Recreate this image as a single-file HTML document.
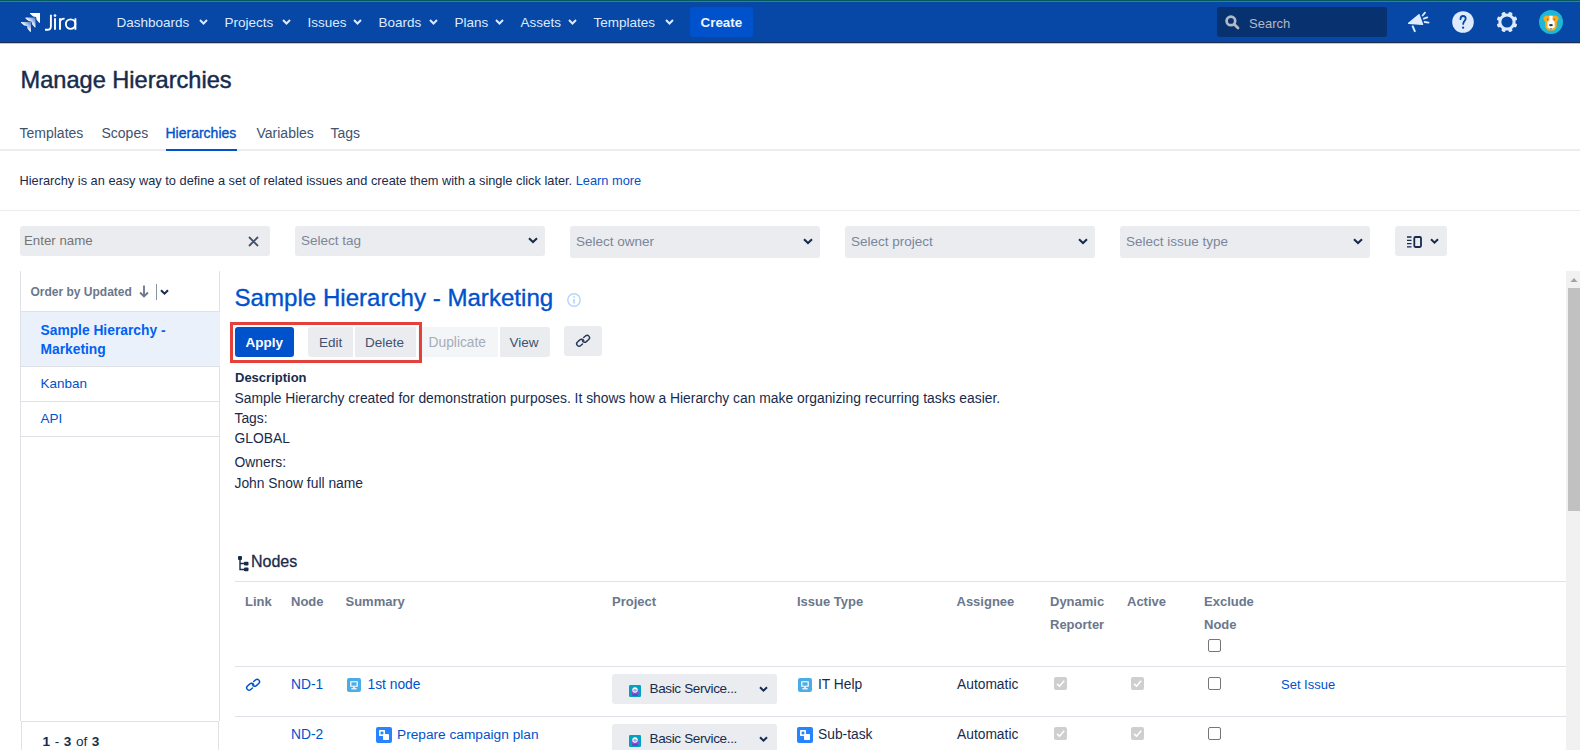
<!DOCTYPE html>
<html><head><meta charset="utf-8">
<style>
html,body{margin:0;padding:0;width:1580px;height:750px;overflow:hidden;background:#fff;position:relative;font-family:"Liberation Sans",sans-serif;color:#172B4D}
.a{position:absolute;white-space:nowrap;line-height:1}
.b{position:absolute}
.nt{color:#DEEBFF;font-size:13.5px;top:15.9px}
.tab{font-size:14px;top:125.5px;color:#42526E}
.sel{background:#EBECF0;border-radius:3px;height:32px;top:226px;width:250px}
.sel2{height:30px}
.selt{font-size:13.5px;color:#7A869A;top:235.3px}
.th{font-size:13px;font-weight:bold;color:#6B778C}
.lnk{color:#0052CC}
.btn{background:#EBECF0;height:30px;top:327px}
svg{position:absolute;overflow:visible}
</style></head><body>

<!-- NAV -->
<div class="b" style="left:0;top:0;width:1580px;height:43px;background:#0747A6"></div>
<div class="b" style="left:0;top:0;width:1580px;height:1px;background:#035A5C"></div>
<div class="b" style="left:0;top:1px;width:1580px;height:1px;background:#3E7E80"></div>
<div class="b" style="left:0;top:42px;width:1580px;height:1px;background:#1D3050"></div>
<div class="b" style="left:0;top:43px;width:1580px;height:1px;background:#C4C7CF"></div>

<!-- logo -->
<svg style="left:21px;top:13px" width="19" height="19" viewBox="0 0 19 19">
  <defs>
    <linearGradient id="g1" x1="0.9" y1="0.1" x2="0.1" y2="0.9"><stop offset="0" stop-color="#5F8AD0"/><stop offset="0.55" stop-color="#fff"/></linearGradient>
  </defs>
  <path transform="translate(9 0)" d="M0 0H10V9.8L9.1 9.7L6.6 6.7L6.1 4.1L3.2 3.5L0 0.8Z" fill="#fff"/>
  <path transform="translate(4.5 4.6)" d="M0 0H10V9.8L9.1 9.7L6.6 6.7L6.1 4.1L3.2 3.5L0 0.8Z" fill="url(#g1)"/>
  <path transform="translate(0 9)" d="M0 0H10V9.8L9.1 9.7L6.6 6.7L6.1 4.1L3.2 3.5L0 0.8Z" fill="url(#g1)"/>
</svg>
<svg style="left:0px;top:0px" width="90" height="40" viewBox="0 0 90 40">
  <g stroke="#fff" stroke-width="1.9" fill="none">
    <path d="M50.9 14.8V26.2C50.9 28.6 49.4 29.8 47.2 29.8H45"/>
    <path d="M55 18.3V29.8"/>
    <path d="M60 18.3V29.8M60 22.4C60 19.8 61.8 18.6 64.6 18.6"/>
    <circle cx="70.6" cy="24.1" r="4.75"/>
    <path d="M75.4 18.3V29.8"/>
  </g>
  <circle cx="55" cy="15.6" r="1.35" fill="#fff"/>
</svg>
<div class="a nt" style="left:116.5px">Dashboards</div>
<div class="a nt" style="left:224.5px">Projects</div>
<div class="a nt" style="left:307.5px">Issues</div>
<div class="a nt" style="left:378.5px">Boards</div>
<div class="a nt" style="left:454.5px">Plans</div>
<div class="a nt" style="left:520.5px">Assets</div>
<div class="a nt" style="left:593.5px">Templates</div>
<svg style="left:199px;top:19px" width="9" height="6"><path d="M1 1L4.5 4.5L8 1" stroke="#DEEBFF" stroke-width="2" fill="none"/></svg>
<svg style="left:281.5px;top:19px" width="9" height="6"><path d="M1 1L4.5 4.5L8 1" stroke="#DEEBFF" stroke-width="2" fill="none"/></svg>
<svg style="left:352.5px;top:19px" width="9" height="6"><path d="M1 1L4.5 4.5L8 1" stroke="#DEEBFF" stroke-width="2" fill="none"/></svg>
<svg style="left:429px;top:19px" width="9" height="6"><path d="M1 1L4.5 4.5L8 1" stroke="#DEEBFF" stroke-width="2" fill="none"/></svg>
<svg style="left:495px;top:19px" width="9" height="6"><path d="M1 1L4.5 4.5L8 1" stroke="#DEEBFF" stroke-width="2" fill="none"/></svg>
<svg style="left:568px;top:19px" width="9" height="6"><path d="M1 1L4.5 4.5L8 1" stroke="#DEEBFF" stroke-width="2" fill="none"/></svg>
<svg style="left:664.5px;top:19px" width="9" height="6"><path d="M1 1L4.5 4.5L8 1" stroke="#DEEBFF" stroke-width="2" fill="none"/></svg>

<div class="b" style="left:690px;top:7px;width:63px;height:30px;background:#0052CC;border-radius:3px"></div>
<div class="a" style="left:700.5px;top:16px;font-size:13.4px;font-weight:bold;color:#F0F5FF">Create</div>

<!-- search -->
<div class="b" style="left:1217px;top:7px;width:170px;height:30px;background:#08316F;border-radius:3px"></div>
<svg style="left:1225px;top:15px" width="15" height="15"><circle cx="5.9" cy="5.9" r="4.3" stroke="#B3BAC5" stroke-width="2.7" fill="none"/><path d="M9.2 9.2L13 13" stroke="#B3BAC5" stroke-width="2.8" stroke-linecap="round"/></svg>
<div class="a" style="left:1249px;top:17px;font-size:13px;color:#B3BAC5">Search</div>

<!-- megaphone -->
<svg style="left:1404px;top:8px" width="30" height="28">
  <path d="M4.6 15.3L15 6.8L18.6 16.4Z" fill="#DEEBFF" stroke="#DEEBFF" stroke-width="1.4" stroke-linejoin="round"/>
  <path d="M8.7 18.3L10.8 23.2" stroke="#DEEBFF" stroke-width="2" stroke-linecap="round"/>
  <path d="M18.6 7.5L21 4.6M19.8 10.6L23.3 9.4M20.6 14L24.6 14.6" stroke="#DEEBFF" stroke-width="1.8" stroke-linecap="round"/>
</svg>
<!-- help -->
<svg style="left:1452px;top:11px" width="22" height="22"><circle cx="11" cy="11" r="10.8" fill="#DEEBFF"/><path d="M8.5 8.2C8.5 6.2 9.7 5 11.1 5C12.6 5 13.7 6.1 13.7 7.6C13.7 9.8 11.2 10 11.2 12.9" stroke="#0747A6" stroke-width="1.8" fill="none" stroke-linecap="round"/><circle cx="11.1" cy="16.7" r="1.15" fill="#0747A6"/></svg>
<!-- gear -->
<svg style="left:1496px;top:11px" width="22" height="22" viewBox="0 0 22 22">
  <g fill="#DEEBFF">
    <circle cx="11" cy="11" r="8.6"/>
    <rect x="9" y="0.6" width="4" height="20.8" rx="1.2" transform="rotate(22.5 11 11)"/>
    <rect x="9" y="0.6" width="4" height="20.8" rx="1.2" transform="rotate(67.5 11 11)"/>
    <rect x="9" y="0.6" width="4" height="20.8" rx="1.2" transform="rotate(112.5 11 11)"/>
    <rect x="9" y="0.6" width="4" height="20.8" rx="1.2" transform="rotate(157.5 11 11)"/>
  </g>
  <circle cx="11" cy="11" r="5.6" fill="#0747A6"/>
</svg>
<!-- avatar -->
<svg style="left:1539px;top:10px" width="24" height="24" viewBox="0 0 24 24">
  <circle cx="12" cy="12" r="12" fill="#1CB8D8"/>
  <path d="M4.2 7.6L6.8 5.4L10 5.8H14L17.2 5.4L19.8 7.6L19 10.6L17.9 11.4L17.6 17.6L15.2 20.6H8.8L6.4 17.6L6.1 11.4L5 10.6Z" fill="#FFA81A"/>
  <path d="M10.3 5.8H13.7L13.5 9.8L15.6 12V17.6L12 19.2L8.4 17.6V12L10.5 9.8Z" fill="#fff"/>
  <ellipse cx="12" cy="15.2" rx="1.9" ry="1.15" fill="#253858"/>
  <rect x="7.9" y="8.6" width="1.5" height="1.5" fill="#8C7B5A"/><rect x="14.6" y="8.6" width="1.5" height="1.5" fill="#8C7B5A"/>
  <rect x="11.3" y="18.3" width="1.4" height="0.9" fill="#253858"/>
</svg>

<!-- HEADER -->
<div class="a" style="left:20.5px;top:68.6px;font-size:23.6px;color:#172B4D;-webkit-text-stroke:0.45px #172B4D">Manage Hierarchies</div>

<div class="a tab" style="left:19.5px">Templates</div>
<div class="a tab" style="left:101.5px">Scopes</div>
<div class="a tab lnk" style="left:165.5px;-webkit-text-stroke:0.35px #0052CC">Hierarchies</div>
<div class="a tab" style="left:256.5px">Variables</div>
<div class="a tab" style="left:330.5px">Tags</div>
<div class="b" style="left:0;top:149px;width:1580px;height:2px;background:#EBECF0"></div>
<div class="b" style="left:166px;top:149px;width:71px;height:2px;background:#0052CC"></div>

<div class="a" style="left:19.5px;top:174.9px;font-size:12.8px;color:#172B4D">Hierarchy is an easy way to define a set of related issues and create them with a single click later. <span class="lnk">Learn more</span></div>
<div class="b" style="left:0;top:210px;width:1580px;height:1px;background:#EBECF0"></div>

<!-- FILTERS -->
<div class="b" style="left:20px;top:226px;width:250px;height:30px;background:#EBECF0;border-radius:3px"></div>
<div class="a" style="left:24px;top:233.8px;font-size:13.3px;color:#757575">Enter name</div>
<svg style="left:248px;top:235.5px" width="11" height="11"><path d="M1 1L10 10M10 1L1 10" stroke="#42526E" stroke-width="1.8"/></svg>

<div class="b sel sel2" style="left:295px"></div>
<div class="a selt" style="left:301px;top:234.4px">Select tag</div>
<svg style="left:528px;top:237px" width="10" height="7"><path d="M1 1.2L5 5L9 1.2" stroke="#172B4D" stroke-width="2" fill="none"/></svg>
<div class="b sel" style="left:570px"></div>
<div class="a selt" style="left:576px">Select owner</div>
<svg style="left:803px;top:238px" width="10" height="7"><path d="M1 1.2L5 5L9 1.2" stroke="#172B4D" stroke-width="2" fill="none"/></svg>
<div class="b sel" style="left:845px"></div>
<div class="a selt" style="left:851px">Select project</div>
<svg style="left:1078px;top:238px" width="10" height="7"><path d="M1 1.2L5 5L9 1.2" stroke="#172B4D" stroke-width="2" fill="none"/></svg>
<div class="b sel" style="left:1120px"></div>
<div class="a selt" style="left:1126px">Select issue type</div>
<svg style="left:1353px;top:238px" width="10" height="7"><path d="M1 1.2L5 5L9 1.2" stroke="#172B4D" stroke-width="2" fill="none"/></svg>

<div class="b" style="left:1395px;top:226px;width:52px;height:30px;background:#EBECF0;border-radius:3px"></div>
<svg style="left:1407px;top:236px" width="15" height="12">
  <path d="M0 1H4.5M0 4.3H4.5M0 7.6H4.5M0 10.9H4.5" stroke="#172B4D" stroke-width="1.3"/>
  <rect x="7.3" y="1" width="6.7" height="10" rx="1.2" stroke="#172B4D" stroke-width="1.8" fill="none"/>
</svg>
<svg style="left:1430px;top:238px" width="10" height="7"><path d="M1 1.2L4.5 4.6L8 1.2" stroke="#172B4D" stroke-width="2" fill="none"/></svg>

<!-- LEFT PANEL -->
<div class="b" style="left:20px;top:271px;width:1px;height:450px;background:#DFE1E6"></div>
<div class="b" style="left:219px;top:271px;width:1px;height:450px;background:#DFE1E6"></div>
<div class="a" style="left:30.5px;top:286.4px;font-size:12px;font-weight:bold;color:#6B778C">Order by Updated</div>
<svg style="left:139px;top:285px" width="10" height="13"><path d="M5 0.5V11.5M1 7.5L5 11.5L9 7.5" stroke="#6B778C" stroke-width="1.8" fill="none"/></svg>
<div class="b" style="left:156px;top:284px;width:1px;height:16px;background:#8993A4"></div>
<svg style="left:160px;top:289px" width="10" height="7"><path d="M1 1.2L4.5 4.6L8 1.2" stroke="#172B4D" stroke-width="2" fill="none"/></svg>
<div class="b" style="left:21px;top:311px;width:198px;height:1px;background:#DFE1E6"></div>
<div class="b" style="left:21px;top:312px;width:199px;height:54px;background:#EAF1FB"></div>
<div class="a" style="left:40.5px;top:323.5px;font-size:13.8px;font-weight:bold;color:#0061F2">Sample Hierarchy -</div>
<div class="a" style="left:40.5px;top:343.1px;font-size:13.8px;font-weight:bold;color:#0061F2">Marketing</div>
<div class="b" style="left:21px;top:366px;width:198px;height:1px;background:#DFE1E6"></div>
<div class="a lnk" style="left:40.5px;top:377.2px;font-size:13.5px">Kanban</div>
<div class="b" style="left:21px;top:401px;width:198px;height:1px;background:#DFE1E6"></div>
<div class="a lnk" style="left:40.5px;top:411.7px;font-size:13.5px">API</div>
<div class="b" style="left:21px;top:436px;width:198px;height:1px;background:#DFE1E6"></div>
<div class="b" style="left:21px;top:721px;width:198px;height:1px;background:#DFE1E6"></div>
<div class="b" style="left:21px;top:721px;width:1px;height:29px;background:#DFE1E6"></div>
<div class="b" style="left:218px;top:721px;width:1px;height:29px;background:#DFE1E6"></div>
<div class="a" style="left:42.5px;top:735.2px;font-size:13.6px;color:#172B4D;word-spacing:0.8px"><b>1</b> - <b>3</b> of <b>3</b></div>

<!-- MAIN -->
<div class="a lnk" style="left:234.5px;top:286.2px;font-size:24.1px;-webkit-text-stroke:0.35px #0052CC">Sample Hierarchy - Marketing</div>
<svg style="left:567px;top:293px" width="14" height="14"><circle cx="7" cy="7" r="6.2" stroke="#B3D4FF" stroke-width="1.4" fill="none"/><path d="M7 6V10.5" stroke="#B3D4FF" stroke-width="1.6"/><circle cx="7" cy="4" r="0.9" fill="#B3D4FF"/></svg>

<div class="b" style="left:230px;top:322px;width:186px;height:35px;border:3px solid #E5413B"></div>
<div class="b" style="left:235px;top:327px;width:59px;height:30px;background:#0052CC;border-radius:3px"></div>
<div class="a" style="left:245.5px;top:335.6px;font-size:13.5px;font-weight:bold;color:#fff">Apply</div>
<div class="b btn" style="left:308px;width:45px;border-radius:3px 0 0 3px"></div>
<div class="a" style="left:319px;top:335.8px;font-size:13.5px;color:#42526E">Edit</div>
<div class="b btn" style="left:355px;width:61px"></div>
<div class="a" style="left:365px;top:335.8px;font-size:13.5px;color:#42526E">Delete</div>
<div class="b btn" style="left:418px;width:80px;background:#F4F5F7"></div>
<div class="a" style="left:428.5px;top:335.8px;font-size:13.8px;color:#A5ADBA">Duplicate</div>
<div class="b btn" style="left:500px;width:50px;border-radius:0 3px 3px 0"></div>
<div class="a" style="left:509.5px;top:335.8px;font-size:13.5px;color:#42526E">View</div>
<div class="b" style="left:230px;top:322px;width:186px;height:35px;border:3px solid #E5413B"></div>
<div class="b" style="left:564px;top:326px;width:38px;height:30px;background:#EBECF0;border-radius:3px"></div>
<svg style="left:574.6px;top:332.6px" width="16" height="16"><g stroke="#253858" stroke-width="1.45" fill="none" stroke-linecap="round"><path transform="translate(5.3 9.7) rotate(-42)" d="M0.8 2.4H-1.6A2.4 2.4 0 0 1 -1.6 -2.4H1.6A2.4 2.4 0 0 1 3.9 0.9"/><path transform="translate(10.9 5.8) rotate(138)" d="M0.8 2.4H-1.6A2.4 2.4 0 0 1 -1.6 -2.4H1.6A2.4 2.4 0 0 1 3.9 0.9"/></g></svg>

<div class="a" style="left:235px;top:371px;font-size:13px;font-weight:bold;color:#172B4D">Description</div>
<div class="a" style="left:234.5px;top:391.5px;font-size:13.85px">Sample Hierarchy created for demonstration purposes. It shows how a Hierarchy can make organizing recurring tasks easier.</div>
<div class="a" style="left:234.5px;top:411.5px;font-size:13.85px">Tags:</div>
<div class="a" style="left:234.5px;top:431.5px;font-size:13.85px">GLOBAL</div>
<div class="a" style="left:234.5px;top:456.0px;font-size:13.85px">Owners:</div>
<div class="a" style="left:234.5px;top:476.5px;font-size:13.85px">John Snow full name</div>

<!-- NODES -->
<svg style="left:238px;top:555.5px" width="11" height="16" viewBox="0 0 11 16"><path d="M2 1.5V13.5H7.5M2 7.5H7.5" stroke="#172B4D" stroke-width="1.4" fill="none"/><rect x="0" y="0" width="4" height="4" rx="1" fill="#172B4D"/><rect x="6" y="5.8" width="4.5" height="3.6" rx="1" fill="#172B4D"/><rect x="6" y="11.6" width="4.5" height="3.6" rx="1" fill="#172B4D"/></svg>
<div class="a" style="left:251px;top:554px;font-size:16px;color:#172B4D;-webkit-text-stroke:0.3px #172B4D">Nodes</div>
<div class="b" style="left:235px;top:581px;width:1331px;height:1px;background:#DFE1E6"></div>

<div class="a th" style="left:245px;top:594.6px">Link</div>
<div class="a th" style="left:291px;top:594.6px">Node</div>
<div class="a th" style="left:345.5px;top:594.6px">Summary</div>
<div class="a th" style="left:612px;top:594.6px">Project</div>
<div class="a th" style="left:797px;top:594.6px">Issue Type</div>
<div class="a th" style="left:956.5px;top:594.6px">Assignee</div>
<div class="a th" style="left:1050px;top:594.6px">Dynamic</div>
<div class="a th" style="left:1050px;top:617.5px">Reporter</div>
<div class="a th" style="left:1127px;top:594.6px">Active</div>
<div class="a th" style="left:1204px;top:594.6px">Exclude</div>
<div class="a th" style="left:1204px;top:617.5px">Node</div>
<div class="b" style="left:1208px;top:639px;width:11px;height:11px;border:1px solid #767676;border-radius:2px;background:#fff"></div>
<div class="b" style="left:235px;top:666px;width:1331px;height:1px;background:#DFE1E6"></div>

<!-- row 1 -->
<svg style="left:245px;top:677px" width="16" height="16"><g stroke="#0052CC" stroke-width="1.45" fill="none" stroke-linecap="round"><path transform="translate(5.3 9.7) rotate(-42)" d="M0.8 2.4H-1.6A2.4 2.4 0 0 1 -1.6 -2.4H1.6A2.4 2.4 0 0 1 3.9 0.9"/><path transform="translate(10.9 5.8) rotate(138)" d="M0.8 2.4H-1.6A2.4 2.4 0 0 1 -1.6 -2.4H1.6A2.4 2.4 0 0 1 3.9 0.9"/></g></svg>
<div class="a lnk" style="left:291px;top:678.4px;font-size:13.8px">ND-1</div>
<svg style="left:347px;top:678px" width="14" height="14" viewBox="0 0 14 14"><rect width="14" height="14" rx="2" fill="#4BADE8"/><rect x="3.2" y="3.2" width="7.6" height="5.6" rx="0.6" fill="#fff"/><rect x="4.4" y="4.3" width="5.2" height="3.4" fill="#4BADE8"/><rect x="6.2" y="8.8" width="1.6" height="1.5" fill="#fff"/><rect x="4.3" y="10.2" width="5.4" height="1.2" fill="#fff"/></svg>
<div class="a lnk" style="left:367.5px;top:678.4px;font-size:13.8px">1st node</div>
<div class="b" style="left:612px;top:674px;width:165px;height:30px;background:#EBECF0;border-radius:3px"></div>
<svg style="left:629px;top:685px" width="12" height="12" viewBox="0 0 12 12"><rect width="12" height="12" rx="1.2" fill="#00A3BF"/><ellipse cx="6" cy="7.3" rx="4.1" ry="3" fill="#8B4FD6"/><rect x="3.2" y="9.3" width="5.6" height="1.4" fill="#6A35B8"/><circle cx="6" cy="5" r="2.7" fill="#fff"/><ellipse cx="6" cy="5.4" rx="1.8" ry="1.4" fill="#8CB4F2"/></svg>
<div class="a" style="left:649.5px;top:681.6px;font-size:13.5px;letter-spacing:-0.35px">Basic Service...</div>
<svg style="left:759px;top:686px" width="10" height="7"><path d="M1 1.2L4.5 4.6L8 1.2" stroke="#172B4D" stroke-width="2" fill="none"/></svg>
<svg style="left:798px;top:678px" width="14" height="14" viewBox="0 0 14 14"><rect width="14" height="14" rx="2" fill="#4BADE8"/><rect x="3.2" y="3.2" width="7.6" height="5.6" rx="0.6" fill="#fff"/><rect x="4.4" y="4.3" width="5.2" height="3.4" fill="#4BADE8"/><rect x="6.2" y="8.8" width="1.6" height="1.5" fill="#fff"/><rect x="4.3" y="10.2" width="5.4" height="1.2" fill="#fff"/></svg>
<div class="a" style="left:818px;top:678.3px;font-size:13.8px">IT Help</div>
<div class="a" style="left:957px;top:678.2px;font-size:13.8px">Automatic</div>
<div class="b" style="left:1054px;top:677px;width:13px;height:13px;border-radius:2px;background:#CFCFCF"></div>
<svg style="left:1054px;top:677px" width="13" height="13"><path d="M3 6.8L5.5 9.2L10.2 3.8" stroke="#fff" stroke-width="1.6" fill="none"/></svg>
<div class="b" style="left:1131px;top:677px;width:13px;height:13px;border-radius:2px;background:#CFCFCF"></div>
<svg style="left:1131px;top:677px" width="13" height="13"><path d="M3 6.8L5.5 9.2L10.2 3.8" stroke="#fff" stroke-width="1.6" fill="none"/></svg>
<div class="b" style="left:1208px;top:677px;width:11px;height:11px;border:1px solid #767676;border-radius:2px;background:#fff"></div>
<div class="a lnk" style="left:1281px;top:678.2px;font-size:13px">Set Issue</div>
<div class="b" style="left:235px;top:716px;width:1331px;height:1px;background:#DFE1E6"></div>

<!-- row 2 -->
<div class="a lnk" style="left:291px;top:728.2px;font-size:13.8px">ND-2</div>
<svg style="left:376px;top:727px" width="16" height="16" viewBox="0 0 16 16"><rect width="16" height="16" rx="2" fill="#2684FF"/><rect x="3" y="3" width="6" height="6" rx="0.8" fill="#fff"/><rect x="4.6" y="4.6" width="2.8" height="2.8" fill="#2684FF"/><rect x="7" y="7" width="6" height="6" rx="0.8" fill="#fff"/></svg>
<div class="a lnk" style="left:397px;top:728.2px;font-size:13.7px">Prepare campaign plan</div>
<div class="b" style="left:612px;top:724px;width:165px;height:30px;background:#EBECF0;border-radius:3px"></div>
<svg style="left:629px;top:735px" width="12" height="12" viewBox="0 0 12 12"><rect width="12" height="12" rx="1.2" fill="#00A3BF"/><ellipse cx="6" cy="7.3" rx="4.1" ry="3" fill="#8B4FD6"/><rect x="3.2" y="9.3" width="5.6" height="1.4" fill="#6A35B8"/><circle cx="6" cy="5" r="2.7" fill="#fff"/><ellipse cx="6" cy="5.4" rx="1.8" ry="1.4" fill="#8CB4F2"/></svg>
<div class="a" style="left:649.5px;top:731.6px;font-size:13.5px;letter-spacing:-0.35px">Basic Service...</div>
<svg style="left:759px;top:736px" width="10" height="7"><path d="M1 1.2L4.5 4.6L8 1.2" stroke="#172B4D" stroke-width="2" fill="none"/></svg>
<svg style="left:797px;top:727px" width="16" height="16" viewBox="0 0 16 16"><rect width="16" height="16" rx="2" fill="#2684FF"/><rect x="3" y="3" width="6" height="6" rx="0.8" fill="#fff"/><rect x="4.6" y="4.6" width="2.8" height="2.8" fill="#2684FF"/><rect x="7" y="7" width="6" height="6" rx="0.8" fill="#fff"/></svg>
<div class="a" style="left:818px;top:728.2px;font-size:13.8px">Sub-task</div>
<div class="a" style="left:957px;top:728.2px;font-size:13.8px">Automatic</div>
<div class="b" style="left:1054px;top:727px;width:13px;height:13px;border-radius:2px;background:#CFCFCF"></div>
<svg style="left:1054px;top:727px" width="13" height="13"><path d="M3 6.8L5.5 9.2L10.2 3.8" stroke="#fff" stroke-width="1.6" fill="none"/></svg>
<div class="b" style="left:1131px;top:727px;width:13px;height:13px;border-radius:2px;background:#CFCFCF"></div>
<svg style="left:1131px;top:727px" width="13" height="13"><path d="M3 6.8L5.5 9.2L10.2 3.8" stroke="#fff" stroke-width="1.6" fill="none"/></svg>
<div class="b" style="left:1208px;top:727px;width:11px;height:11px;border:1px solid #767676;border-radius:2px;background:#fff"></div>

<!-- SCROLLBAR -->
<div class="b" style="left:1566px;top:271px;width:14px;height:479px;background:#F1F1F1"></div>
<svg style="left:1566px;top:271px" width="14" height="14"><path d="M4.5 11L8 7L11.5 11Z" fill="#A3A3A3"/></svg>
<div class="b" style="left:1568px;top:288px;width:12px;height:223px;background:#C1C1C1"></div>

</body></html>
